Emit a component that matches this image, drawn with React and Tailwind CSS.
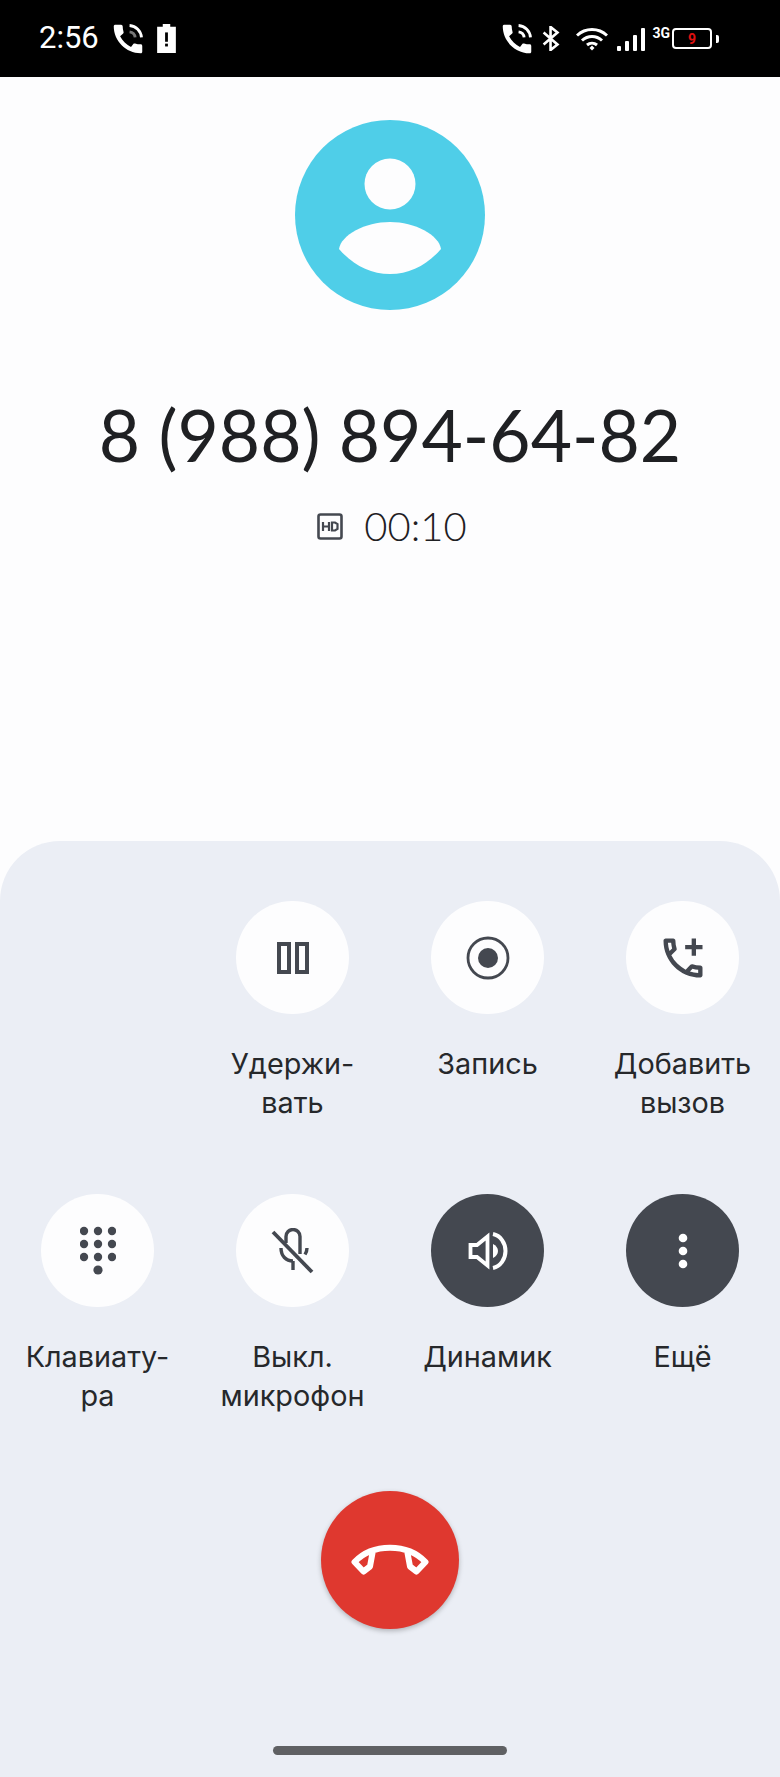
const dark = '#444850'

const PauseIcon = () => (
  <svg width="32" height="32" viewBox="0 0 32 32" fill="none" stroke={dark} strokeWidth="4">
    <rect x="2" y="2" width="10" height="28" />
    <rect x="20" y="2" width="10" height="28" />
  </svg>
)

const RecordIcon = () => (
  <svg width="44" height="44" viewBox="0 0 44 44" fill="none">
    <circle cx="22" cy="22" r="20" stroke={dark} strokeWidth="2.800" />
    <circle cx="22" cy="22" r="10" fill={dark} />
  </svg>
)

const AddCallIcon = () => (
  <svg width="52" height="52" viewBox="0 0 24 24" fill={dark}>
    <path d="M20 15.5c-1.25 0-2.45-.2-3.57-.57-.1-.03-.21-.05-.31-.05-.26 0-.51.1-.71.29l-2.2 2.2c-2.83-1.44-5.15-3.75-6.59-6.59l2.2-2.21c.28-.26.36-.65.25-1C8.7 6.45 8.5 5.25 8.5 4c0-.55-.45-1-1-1H4c-.55 0-1 .45-1 1 0 9.39 7.61 17 17 17 .55 0 1-.45 1-1v-3.5c0-.55-.45-1-1-1zM5.03 5h1.5c.07.88.22 1.75.45 2.58l-1.2 1.21c-.4-1.21-.66-2.47-.75-3.79zM19 18.97c-1.32-.09-2.6-.35-3.8-.76l1.2-1.2c.85.24 1.72.39 2.6.45v1.51zM18 6V3h-2v3h-3v2h3v3h2V8h3V6z" />
  </svg>
)

const DialpadIcon = () => (
  <svg width="36" height="50" viewBox="0 0 36 50" fill={dark}>
    {[4, 18, 32].map(x => [5, 18, 31].map(y => <circle key={`${x}-${y}`} cx={x} cy={y} r="4.200" />))}
    <circle cx="18" cy="44" r="4.600" />
  </svg>
)

const MicOffIcon = () => (
  <svg width="44" height="46" viewBox="0 0 44 46" fill="none" stroke={dark} strokeWidth="3.400">
    <path d="M15 15V8.500a7 7 0 0 1 14 0V26" />
    <path d="M10 20c0 8 5 13 12 13" />
    <path d="M36 20c0 2.500-.8 4.500-2 6.500" />
    <path d="M22 33v9" />
    <path d="M2 4l39 40" strokeWidth="3.800" />
  </svg>
)

const SpeakerIcon = () => (
  <svg width="44" height="44" viewBox="0 0 44 44" fill="none" stroke="#ffffff" strokeWidth="3.800">
    <path d="M4.500 16h6.500L21.500 7.500v29L11 28H4.500z" />
    <path d="M27 15c3 1.500 5 4 5 7s-2 5.500-5 7z" fill="#ffffff" stroke="none" />
    <path d="M27 5c7.500 1.500 12.500 9 12.500 17S34.500 37.500 27 39" strokeWidth="4" />
  </svg>
)

const MoreIcon = () => (
  <svg width="12" height="40" viewBox="0 0 12 40" fill="#ffffff">
    <circle cx="6" cy="7" r="4.300" />
    <circle cx="6" cy="20" r="4.300" />
    <circle cx="6" cy="33" r="4.300" />
  </svg>
)

const HangUpIcon = () => (
  <svg width="78" height="32" viewBox="0 0 78 32" fill="none" stroke="#ffffff" strokeWidth="6" strokeLinejoin="round" strokeLinecap="round">
    <path d="M21.500 9L19 22.500L12.500 27.500L3.500 18C12 9 25 3.700 39 3.700C53 3.700 66 9 74.500 18L65.500 27.500L59 22.500L56.500 9" />
  </svg>
)

const Avatar = () => (
  <svg width="190" height="190" viewBox="0 0 190 190">
    <circle cx="95" cy="95" r="95" fill="#4fcee8" />
    <circle cx="95" cy="64" r="25.500" fill="#fdfdfe" />
    <path d="M44 129C46 115 70 102 95 102C120 102 144 115 146 129C132 145 115 154 95 154C75 154 58 145 44 129Z" fill="#fdfdfe" />
  </svg>
)

const CALL_PATH = 'M20.01 15.38c-1.23 0-2.42-.2-3.53-.56-.35-.12-.74-.03-1.01.24l-1.57 1.97c-2.83-1.35-5.48-3.9-6.89-6.83l1.95-1.66c.27-.28.35-.67.24-1.02-.37-1.11-.56-2.3-.56-3.53 0-.54-.45-.99-.99-.99H4.19C3.65 3 3 3.24 3 3.99 3 13.28 10.73 21 20.01 21c.71 0 .99-.63.99-1.18v-3.45c0-.54-.45-.99-.99-.99z'

const CallStatus = ({ dim }) => (
  <svg width="38" height="38" viewBox="0 0 24 24" fill="#ffffff">
    <path d={CALL_PATH} />
    <path d="M13 7.500a4 4 0 0 1 3.500 3.500" fill="none" stroke={dim ? '#777777' : '#ffffff'} strokeWidth="1.800" />
    <path d="M13 3.500a8 8 0 0 1 7.500 7.500" fill="none" stroke="#ffffff" strokeWidth="1.800" />
  </svg>
)

const StatusBar = () => (
  <div className="h-[77px] bg-black flex items-center justify-between text-white pl-[39px] pr-[61px]">
    <div className="flex items-center">
      <span className="text-[31px] font-normal font-['Roboto',sans-serif]">2:56</span>
      <div className="ml-[10px]"><CallStatus dim /></div>
      <svg className="ml-[10px]" width="19" height="29" viewBox="0 0 20 31">
        <path d="M6 0h8v3h6v28H0V3h6z" fill="#ffffff" />
        <rect x="8.500" y="9" width="3" height="10" fill="#000000" />
        <rect x="8.500" y="21" width="3" height="3" fill="#000000" />
      </svg>
    </div>
    <div className="flex items-center">
      <CallStatus />
      <svg className="ml-[6px]" width="18" height="25" viewBox="0 0 18 27" fill="none" stroke="#ffffff" strokeWidth="2.800">
        <path d="M1 7l15 13-7.500 6V1L16 7 1 20" />
      </svg>
      <svg className="ml-[16px]" width="32" height="24" viewBox="0 0 32 24" fill="none" stroke="#ffffff" strokeWidth="3">
        <path d="M1 8.500c8.500-8 21.500-8 30 0" />
        <path d="M6 13.500c5.800-5.300 14.200-5.300 20 0" />
        <path d="M11 18c3-2.500 7-2.500 10 0" />
        <path d="M13.500 21l2.500-2.400 2.500 2.400-2.500 2.500z" fill="#ffffff" stroke="none" />
      </svg>
      <div className="ml-[9px] flex items-end gap-[4px] h-[24px]">
        <div className="w-[4px] h-[5px] bg-white rounded-[1px]" />
        <div className="w-[4px] h-[10px] bg-white rounded-[1px]" />
        <div className="w-[4px] h-[16px] bg-white rounded-[1px]" />
        <div className="w-[4px] h-[23px] bg-white rounded-[1px]" />
      </div>
      <span className="ml-[7px] self-start mt-[6px] text-[14px] font-bold leading-none font-['Roboto',sans-serif]">3G</span>
      <div className="ml-[2px] w-[40px] h-[21px] border-2 border-white rounded-[4px] flex items-center justify-center">
        <span className="text-[14px] font-bold leading-none text-[#e01010] font-['Roboto',sans-serif]">9</span>
      </div>
      <div className="ml-[4px] w-[3px] h-[8px] bg-white rounded-r-[2px]" />
    </div>
  </div>
)

const CallButton = ({ label, active, children }) => (
  <div className="flex flex-col items-center h-[293px]">
    <div className={`w-[113px] h-[113px] rounded-full flex items-center justify-center ${active ? 'bg-[#444850]' : 'bg-[#fdfdfe]'}`}>
      {children}
    </div>
    <div className="mt-[30px] text-center text-[28.800px] leading-[39px] text-[#26282b] whitespace-pre-line font-['Inter',sans-serif]">
      {label}
    </div>
  </div>
)

const App = () => {
  return (
    <div className="w-[780px] h-[1777px] flex flex-col bg-[#fdfdfe] overflow-hidden">
      <StatusBar />

      {/* Contact */}
      <div className="h-[764px] flex flex-col items-center">
        <div className="mt-[43px]"><Avatar /></div>
        <div className="mt-[77px] text-[71.300px] leading-[96px] text-[#1f2023] font-['Lato',sans-serif]">8 (988) 894-64-82</div>
        <div className="mt-[19px] pl-[4px] flex items-center">
          <svg width="26" height="27" viewBox="0 0 26 27" fill="none">
            <rect x="1.500" y="1.500" width="23" height="24" rx="2" stroke={dark} strokeWidth="2.600" />
            <path d="M6 9v9M12 9v9M6 13.500h6M15 9.500h3l2.500 1.500v5l-2.500 1.500h-3z" stroke={dark} strokeWidth="2.200" />
          </svg>
          <span className="ml-[21px] text-[40px] font-light leading-[48px] text-[#1f2023] font-['Lato',sans-serif]">00:10</span>
        </div>
      </div>

      {/* Call controls */}
      <div className="flex-1 bg-[#ebeef5] rounded-t-[60px] pt-[60px] flex flex-col items-center">
        <div className="w-full grid grid-cols-4">
          <div className="h-[293px]" />
          <CallButton label={'Удержи-\nвать'}><PauseIcon /></CallButton>
          <CallButton label="Запись"><RecordIcon /></CallButton>
          <CallButton label={'Добавить\nвызов'}><AddCallIcon /></CallButton>
          <CallButton label={'Клавиату-\nра'}><DialpadIcon /></CallButton>
          <CallButton label={'Выкл.\nмикрофон'}><MicOffIcon /></CallButton>
          <CallButton label="Динамик" active><SpeakerIcon /></CallButton>
          <CallButton label="Ещё" active><MoreIcon /></CallButton>
        </div>
        <div className="mt-[4px] w-[138px] h-[138px] rounded-full bg-[#df382f] shadow-[0_2px_5px_rgba(0,0,0,0.25)] flex items-center justify-center">
          <HangUpIcon />
        </div>
        <div className="mt-[117px] w-[234px] h-[9px] rounded-full bg-[#5f6063]" />
      </div>
    </div>
  )
}

export default App
